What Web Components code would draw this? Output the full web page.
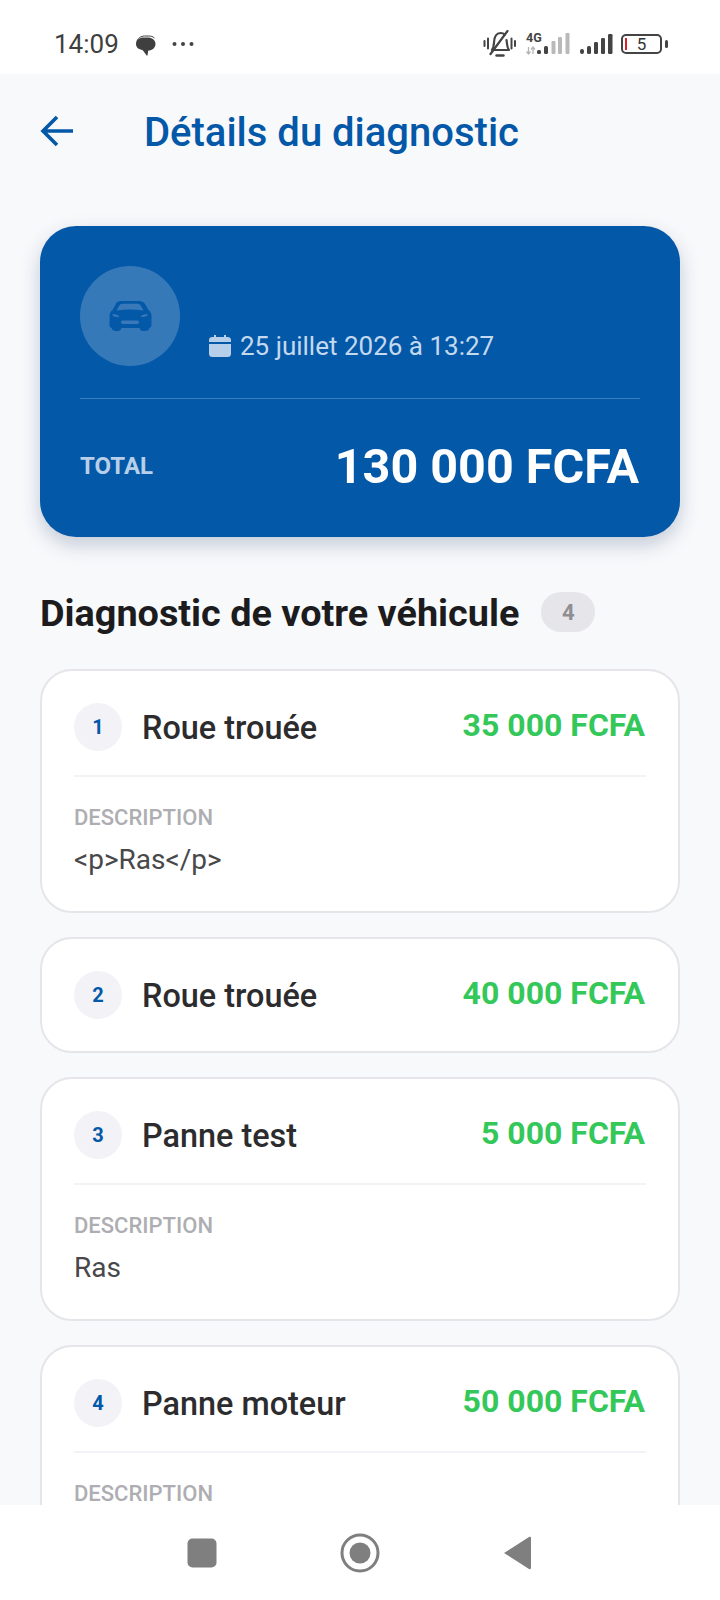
<!DOCTYPE html>
<html lang="fr">
<head>
<meta charset="utf-8">
<title>Détails du diagnostic</title>
<style>
  html, body { margin: 0; height: 100%; }
  body { font-family: Roboto, "Liberation Sans", sans-serif; background: #f8f9fb; }
  diag-app { height: 1600px; }
</style>
</head>
<body>
<diag-app>
  <status-bar slot="status"></status-bar>
  <top-bar slot="top">Détails du diagnostic</top-bar>
  <hero-card date="25 juillet 2026 à 13:27" total="130 000 FCFA"></hero-card>
  <section-title count="4">Diagnostic de votre véhicule</section-title>
  <panne-card num="1" name="Roue trouée" price="35 000 FCFA" desc="&lt;p&gt;Ras&lt;/p&gt;"></panne-card>
  <panne-card num="2" name="Roue trouée" price="40 000 FCFA"></panne-card>
  <panne-card num="3" name="Panne test" price="5 000 FCFA" desc="Ras"></panne-card>
  <panne-card num="4" name="Panne moteur" price="50 000 FCFA" desc="Ras"></panne-card>
  <nav-buttons slot="nav"></nav-buttons>
</diag-app>

<script>
// coque de la page : barre d'état, zone qui défile, boutons android
class DiagApp extends HTMLElement {
  connectedCallback() {
    const shadow = this.attachShadow({ mode: 'open' });
    shadow.innerHTML = `
      <style>
        :host { display: flex; flex-direction: column; overflow: hidden; }
        .scroll { flex: 1; min-height: 0; overflow: hidden; padding: 0 40px; display: flex; flex-direction: column; }
        ::slotted(panne-card) { flex: none; }
      </style>
      <slot name="status"></slot>
      <div class="scroll">
        <slot name="top"></slot>
        <slot></slot>
      </div>
      <slot name="nav"></slot>`;
  }
}

class StatusBar extends HTMLElement {
  connectedCallback() {
    const shadow = this.attachShadow({ mode: 'open' });
    shadow.innerHTML = `
      <style>
        :host { display: flex; flex: none; box-sizing: border-box; height: 74px; background: #fff; align-items: center; padding: 14px 52px 0 54px; color: #3f3f3f; font-size: 26px; }
        .left { display: flex; align-items: center; }
        .right { margin-left: auto; display: flex; align-items: center; }
        svg { display: block; }
        .g4 { position: relative; width: 44px; height: 22px; }
        .g4 span { position: absolute; left: 0; top: -1px; font-size: 12.500px; font-weight: 700; line-height: 12px; color: #444; }
        .batt { position: relative; box-sizing: border-box; width: 41px; height: 20px; border: 2px solid #444; border-radius: 5px; display: flex; align-items: center; justify-content: center; font-size: 17px; line-height: 14px; color: #333; }
        .batt i { position: absolute; left: 2px; top: 2px; bottom: 2px; width: 2px; background: #d8232a; }
      </style>
      <div class="left">
        <span>14:09</span>
        <svg style="margin-left:16px;margin-top:3px" width="22" height="22" viewBox="0 0 22 22">
          <path d="M1 9c0-4 3.500-6.500 8-6.500h3.500c4.500 0 8 2.500 8 6.500 0 3.800-3.300 6.500-7.200 6.500l-.8 4.800c-.1.500-.5.500-.8.200L7.500 15C3.800 14.500 1 12.500 1 9z" fill="#3f3f3f"/>
          <path d="M2 6.500C2.500 3.500 6 1 9.500 1h4c2.500 0 4.500 .6 6 2" fill="none" stroke="#3f3f3f" stroke-width="1"/>
        </svg>
        <svg style="margin-left:15px" width="22" height="6" viewBox="0 0 22 6" fill="#444"><circle cx="2.500" cy="3" r="2"/><circle cx="11" cy="3" r="2"/><circle cx="19.500" cy="3" r="2"/></svg>
      </div>
      <div class="right">
        <svg width="33" height="28" viewBox="0 0 33 28" fill="none" stroke="#444" stroke-width="2.200" stroke-linecap="round" stroke-linejoin="round">
          <path d="M9 20c1.500-2 1.800-4 2-7.500C11.300 7 13.500 3 17.500 3c1.800 0 3.300 .6 4.300 1.700M23.500 10c.2 1 .3 1.800 .4 3 .2 3 .8 5 2 7H9"/>
          <path d="M7.500 24 24.500 1"/>
          <path d="M13.500 25.500h7" stroke-width="2.400"/>
          <path d="M1.500 11v5M5 8.500v10M28.500 8.500v10M32 11v5" stroke-width="2"/>
        </svg>
        <div class="g4" style="margin-left:10px">
          <span>4G</span>
          <svg style="position:absolute;left:0;top:0" width="44" height="22" viewBox="0 0 44 22">
            <path d="M2.500 14v7M0.500 18.500l2 2.500 2-2.500M7 14v7M5 16.500l2-2.500 2 2.500" fill="none" stroke="#b5b5b5" stroke-width="1.300"/>
            <rect x="11" y="17" width="4" height="4" rx="1.500" fill="#444"/>
            <rect x="18" y="13" width="4" height="8" rx="1.500" fill="#444"/>
            <rect x="25.500" y="8" width="4" height="13" rx="1.200" fill="#b9b9b9"/>
            <rect x="32" y="4" width="4" height="17" rx="1.200" fill="#b9b9b9"/>
            <rect x="39.500" y="0" width="4" height="21" rx="1.200" fill="#b9b9b9"/>
          </svg>
        </div>
        <svg style="margin-left:10px" width="33" height="20" viewBox="0 0 33 20" fill="#444">
          <rect x="0" y="15" width="4" height="5" rx="2"/>
          <rect x="7" y="12" width="4" height="8" rx="1.500"/>
          <rect x="14" y="8" width="4" height="12" rx="1.200"/>
          <rect x="21" y="4" width="4" height="16" rx="1.200"/>
          <rect x="28" y="0" width="4.500" height="20" rx="1.200"/>
        </svg>
        <div class="batt" style="margin-left:8px"><i></i>5</div>
        <svg style="margin-left:3px" width="3" height="8" viewBox="0 0 3 8"><rect width="3" height="8" rx="1.500" fill="#444"/></svg>
      </div>`;
  }
}

class TopBar extends HTMLElement {
  connectedCallback() {
    const shadow = this.attachShadow({ mode: 'open' });
    shadow.innerHTML = `
      <style>
        :host { display: flex; flex: none; align-items: center; height: 114px; margin-bottom: 38px; color: #0458a8; font-size: 40px; font-weight: 500; }
        svg { display: block; flex: none; margin-right: 71px; }
        span { margin-top: 2px; }
      </style>
      <svg width="33" height="32" viewBox="0 0 33 32" fill="none" stroke="#0458a8" stroke-width="3.600">
        <path d="M33 16H3M17 2 3 16l14 14"/>
      </svg>
      <span><slot></slot></span>`;
  }
}

class HeroCard extends HTMLElement {
  connectedCallback() {
    const shadow = this.attachShadow({ mode: 'open' });
    shadow.innerHTML = `
      <style>
        :host { display: block; flex: none; box-sizing: border-box; height: 311px; background: #0458a8; border-radius: 36px; padding: 40px; color: #fff; box-shadow: 0 8px 20px rgba(4, 40, 90, .22); }
        .head { display: flex; align-items: flex-end; padding-bottom: 32px; border-bottom: 1px solid rgba(255,255,255,.22); }
        .ic { width: 100px; height: 100px; border-radius: 50%; background: rgba(255,255,255,.2); display: flex; align-items: center; justify-content: center; flex: none; }
        .date { display: flex; align-items: center; margin-left: 29px; margin-bottom: 5px; font-size: 26px; color: #c4d8ee; line-height: 30px; }
        .date svg { margin-right: 9px; }
        .foot { display: flex; align-items: center; justify-content: space-between; height: 134px; }
        .lbl { font-size: 24px; font-weight: 700; color: #b7cfe9; }
        .tot { font-size: 48.500px; font-weight: 700; margin-right: 1px; }
      </style>
      <div class="head">
        <div class="ic">
          <svg width="44" height="32" viewBox="0 0 44 32" fill="#0458a8">
            <path d="M13 1h18c3 0 5 1.200 6.500 3.700l3 5.300c2 1.500 3 3.500 3 6v9c0 1.500-.7 2.500-2 3-.5 2-2 3-4.500 3h-2c-2 0-3-1-3.500-3H13.500c-.5 2-1.500 3-3.500 3H8c-2.500 0-4-1-4.500-3-1.300-.5-2-1.500-2-3v-9c0-2.500 1-4.500 3-6l3-5.300C8 2.200 10 1 13 1z"/>
            <path d="M8.500 10.500l2.700-4.700c.7-1.300 1.800-2 3.300-2h15c1.500 0 2.600 .7 3.300 2l2.700 4.700c-8.500-1.500-18.500-1.500-27 0z" fill="#3a79b9"/>
            <path d="M4 14.500c3-.5 5.500 0 7.500 2.300-3 .5-6 .2-7.500-2.300zM40 14.500c-3-.5-5.500 0-7.500 2.300 3 .5 6 .2 7.500-2.300z" fill="#3a79b9"/>
            <rect x="13" y="20.500" width="18" height="3.500" rx="1.700" fill="#3a79b9"/>
          </svg>
        </div>
        <div class="date">
          <svg width="22" height="22" viewBox="0 0 22 22" fill="#b7cfe9">
            <path d="M5 0h2v2h8V0h2v2h2c1.500 0 3 1.200 3 3v2H0V5c0-1.800 1.500-3 3-3h2zM0 9h22v10c0 1.800-1.500 3-3 3H3c-1.500 0-3-1.200-3-3z"/>
          </svg>
          <span></span>
        </div>
      </div>
      <div class="foot"><span class="lbl">TOTAL</span><span class="tot"></span></div>`;
    shadow.querySelector('.date span').textContent = this.getAttribute('date');
    shadow.querySelector('.tot').textContent = this.getAttribute('total');
  }
}

class SectionTitle extends HTMLElement {
  connectedCallback() {
    const shadow = this.attachShadow({ mode: 'open' });
    shadow.innerHTML = `
      <style>
        :host { display: flex; flex: none; align-items: center; height: 40px; margin: 55px 0 37px; font-size: 37.800px; font-weight: 700; color: #1c1c1e; }
        .t { margin-top: 2px; }
        .n { margin-left: 22px; width: 54px; height: 40px; border-radius: 20px; background: #e5e5ea; color: #8e8e93; font-size: 22px; display: flex; align-items: center; justify-content: center; }
      </style>
      <span class="t"><slot></slot></span><span class="n"></span>`;
    shadow.querySelector('.n').textContent = this.getAttribute('count');
  }
}

// une panne : la description est optionnelle
class PanneCard extends HTMLElement {
  connectedCallback() {
    const shadow = this.attachShadow({ mode: 'open' });
    const desc = this.getAttribute('desc');
    shadow.innerHTML = `
      <style>
        :host { display: block; box-sizing: border-box; background: #fff; border: 2px solid #e5e5ea; border-radius: 32px; padding: 31px 32px; margin-bottom: 24px; }
        .row { display: flex; align-items: center; height: 50px; }
        .num { width: 48px; height: 48px; border-radius: 50%; background: #f2f2f7; color: #0458a8; font-size: 20px; font-weight: 700; display: flex; align-items: center; justify-content: center; flex: none; }
        .name { margin-left: 20px; font-size: 32.400px; font-weight: 500; color: #2c2c2e; position: relative; top: 1px; }
        .price { margin: 0 1px 0 auto; font-size: 32px; font-weight: 700; color: #34c759; position: relative; top: -2px; }
        .body { margin-top: 23px; border-top: 2px solid #f2f2f7; padding-top: 28px; }
        .lbl { font-size: 22px; font-weight: 500; color: #aeaeb2; line-height: 26px; }
        .txt { margin: 11px 0 2px; font-size: 28px; color: #48484a; line-height: 36px; }
      </style>
      <div class="row"><span class="num"></span><span class="name"></span><span class="price"></span></div>
      ${desc !== null ? '<div class="body"><div class="lbl">DESCRIPTION</div><div class="txt"></div></div>' : ''}`;
    shadow.querySelector('.num').textContent = this.getAttribute('num');
    shadow.querySelector('.name').textContent = this.getAttribute('name');
    shadow.querySelector('.price').textContent = this.getAttribute('price');
    if (desc !== null) shadow.querySelector('.txt').textContent = desc;
  }
}

class NavButtons extends HTMLElement {
  connectedCallback() {
    const shadow = this.attachShadow({ mode: 'open' });
    shadow.innerHTML = `
      <style>
        :host { display: flex; flex: none; box-sizing: border-box; height: 95px; background: #fff; align-items: center; justify-content: space-between; padding: 0 189px 0 187px; }
        svg { display: block; }
      </style>
      <svg width="30" height="30" viewBox="0 0 30 30"><rect x="0.500" y="0.500" width="29" height="29" rx="5" fill="#7f7f7f"/></svg>
      <svg width="40" height="40" viewBox="0 0 40 40"><circle cx="20" cy="20" r="18" fill="none" stroke="#7f7f7f" stroke-width="3"/><circle cx="20" cy="20" r="10.500" fill="#7f7f7f"/></svg>
      <svg width="28" height="34" viewBox="0 0 28 34"><path d="M26 1 1 17l25 16c1 .5 2 0 2-1V2c0-1-1-1.500-2-1z" fill="#7f7f7f"/></svg>`;
  }
}

customElements.define('diag-app', DiagApp);
customElements.define('status-bar', StatusBar);
customElements.define('top-bar', TopBar);
customElements.define('hero-card', HeroCard);
customElements.define('section-title', SectionTitle);
customElements.define('panne-card', PanneCard);
customElements.define('nav-buttons', NavButtons);
</script>
</body>
</html>
